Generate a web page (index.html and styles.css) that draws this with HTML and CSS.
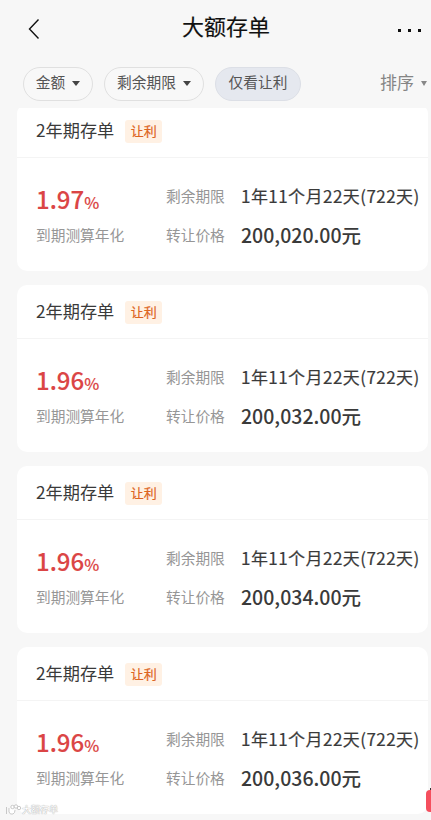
FILE: index.html
```html
<!DOCTYPE html>
<html lang="zh-CN">
<head>
    <meta charset="UTF-8">
    <meta name="viewport" content="width=device-width, initial-scale=1.0">
    <title>大额存单</title>
    <link rel="stylesheet" href="styles.css">
</head>
<body>
    <header class="topbar">
        <svg class="back" width="12" height="22" viewBox="0 0 12 22">
            <path d="M10.5 1.5L1.5 11l9 9.5" fill="none" stroke="#111" stroke-width="1.4"/>
        </svg>
        <h1>大额存单</h1>
        <div class="more"><i></i><i></i><i></i></div>
    </header>

    <nav class="filters">
        <button type="button" class="pill">金额<span class="arrow"></span></button>
        <button type="button" class="pill">剩余期限<span class="arrow"></span></button>
        <button type="button" class="pill active">仅看让利</button>
        <div class="sort">排序<span class="arrow small"></span></div>
    </nav>

    <main class="list">
        <section class="card">
            <div class="card-head"><h2>2年期存单</h2><span class="tag">让利</span></div>
            <div class="card-body">
                <div class="rate">1.97<small>%</small></div>
                <div class="label">剩余期限</div>
                <div class="term">1年11个月22天(722天)</div>
                <div class="label">到期测算年化</div>
                <div class="label">转让价格</div>
                <div class="price">200,020.00元</div>
            </div>
        </section>

        <section class="card">
            <div class="card-head"><h2>2年期存单</h2><span class="tag">让利</span></div>
            <div class="card-body">
                <div class="rate">1.96<small>%</small></div>
                <div class="label">剩余期限</div>
                <div class="term">1年11个月22天(722天)</div>
                <div class="label">到期测算年化</div>
                <div class="label">转让价格</div>
                <div class="price">200,032.00元</div>
            </div>
        </section>

        <section class="card">
            <div class="card-head"><h2>2年期存单</h2><span class="tag">让利</span></div>
            <div class="card-body">
                <div class="rate">1.96<small>%</small></div>
                <div class="label">剩余期限</div>
                <div class="term">1年11个月22天(722天)</div>
                <div class="label">到期测算年化</div>
                <div class="label">转让价格</div>
                <div class="price">200,034.00元</div>
            </div>
        </section>

        <section class="card">
            <div class="card-head"><h2>2年期存单</h2><span class="tag">让利</span></div>
            <div class="card-body">
                <div class="rate">1.96<small>%</small></div>
                <div class="label">剩余期限</div>
                <div class="term">1年11个月22天(722天)</div>
                <div class="label">到期测算年化</div>
                <div class="label">转让价格</div>
                <div class="price">200,036.00元</div>
            </div>
        </section>
    </main>

    <div class="watermark">
        <svg width="17" height="12" viewBox="0 0 17 12" fill="#fff" stroke="#bbb" stroke-width="0.8">
            <path d="M1.5 3v7M4 4v4q1 3 4 2 2-1 2-4"/>
            <circle cx="7.5" cy="3" r="1.7"/>
            <circle cx="11" cy="2.5" r="1.7"/>
            <circle cx="14" cy="4" r="1.7"/>
        </svg>
        <span>大额存单</span>
    </div>
    <div class="float-badge"></div>
</body>
</html>
```
FILE: styles.css
```css
* {
    box-sizing: border-box;
}

body {
    position: relative;
    height: 820px;
    margin: 0;
    overflow: hidden;
    background-color: #f7f7f7;
    color: #3a3a3a;
    font-family: 'Noto Sans CJK SC', sans-serif;
}

h1, h2 {
    margin: 0;
    font-weight: 400;
}

.topbar {
    display: grid;
    grid-template-columns: 60px 1fr 60px;
    align-items: center;
    height: 58px;
    padding: 0 10px 0 28px;
}

.topbar h1 {
    padding-left: 3px;
    margin-top: -8px;
    font-size: 22px;
    line-height: 32px;
    text-align: center;
    color: #111;
    -webkit-text-stroke: 0.15px #111;
}

.more {
    display: flex;
    justify-content: flex-end;
    gap: 7px;
    padding-top: 2px;
}

.more i {
    width: 3px;
    height: 3px;
    background-color: #111;
}

.filters {
    display: flex;
    align-items: center;
    height: 50px;
    padding: 1px 4px 0 23px;
}

.pill {
    display: flex;
    align-items: center;
    justify-content: center;
    width: 70px;
    height: 34px;
    margin-right: 11px;
    padding: 0 0 4px;
    border: 1px solid #e0e0e0;
    border-radius: 17px;
    background-color: #f8f8f8;
    color: #555;
    font-family: inherit;
    font-size: 14.7px;
}

.pill:nth-child(2) {
    width: 100px;
}

.pill.active {
    width: 86px;
    margin-right: 0;
    border-color: #dcdfe6;
    background-color: #e5e8ef;
}

.arrow {
    margin: 4px 0 0 7px;
    border: 4px solid transparent;
    border-top: 5px solid #444;
    border-bottom: 0;
}

.sort {
    display: flex;
    align-items: center;
    margin-left: auto;
    padding-bottom: 4px;
    color: #858585;
    font-size: 17px;
}

.arrow.small {
    border-width: 5px 3.5px 0;
    border-top-color: #888;
}

.list {
    height: 712px;
    padding: 0 3px 0 17px;
    overflow: hidden;
}

.card {
    height: 167px;
    margin-bottom: 14px;
    border-radius: 10px;
    background-color: #fff;
}

.card:first-child {
    margin-top: -4px;
}

.card-head {
    display: flex;
    align-items: center;
    height: 54px;
    padding: 0 19px;
    border-bottom: 1px solid #f4f4f4;
}

.card-head h2 {
    margin: -2px 11px 0 0;
    font-size: 17.2px;
    line-height: 26px;
}

.tag {
    width: 37px;
    height: 23px;
    margin-top: 2px;
    border-radius: 3px;
    background-color: #fff1e4;
    color: #dd6420;
    font-size: 13px;
    line-height: 22px;
    text-align: center;
    -webkit-text-stroke: 0.2px #dd6420;
}

.card-body {
    display: grid;
    grid-template-columns: 130px 75px 1fr;
    grid-template-rows: 39px 39px;
    align-items: center;
    padding: 18px 0 0 19px;
    white-space: nowrap;
}

.label {
    color: #969696;
    font-size: 14.7px;
}

.rate {
    padding-top: 10px;
    color: #db4545;
    font-size: 24px;
    font-weight: 500;
    line-height: 30px;
    -webkit-text-stroke: 0.1px #db4545;
}

.rate small {
    font-size: 16px;
}

.term {
    font-size: 17px;
    letter-spacing: 0.45px;
    -webkit-text-stroke: 0.2px #3a3a3a;
}

.price {
    font-size: 19.5px;
    font-weight: 500;
}

.watermark {
    position: absolute;
    left: 5px;
    bottom: 3px;
    display: flex;
    align-items: center;
    color: #fff;
    font-size: 9px;
    line-height: 14px;
    text-shadow: 0 0 1px #aaa, 0 0 1px #aaa;
}

.float-badge {
    position: absolute;
    right: -11px;
    bottom: 8px;
    width: 16px;
    height: 22px;
    border-radius: 4px;
    background-color: #f54f5e;
}

.float-badge::before {
    content: '';
    position: absolute;
    left: 4px;
    top: -2px;
    width: 8px;
    height: 2px;
    background-color: #333;
}
```
